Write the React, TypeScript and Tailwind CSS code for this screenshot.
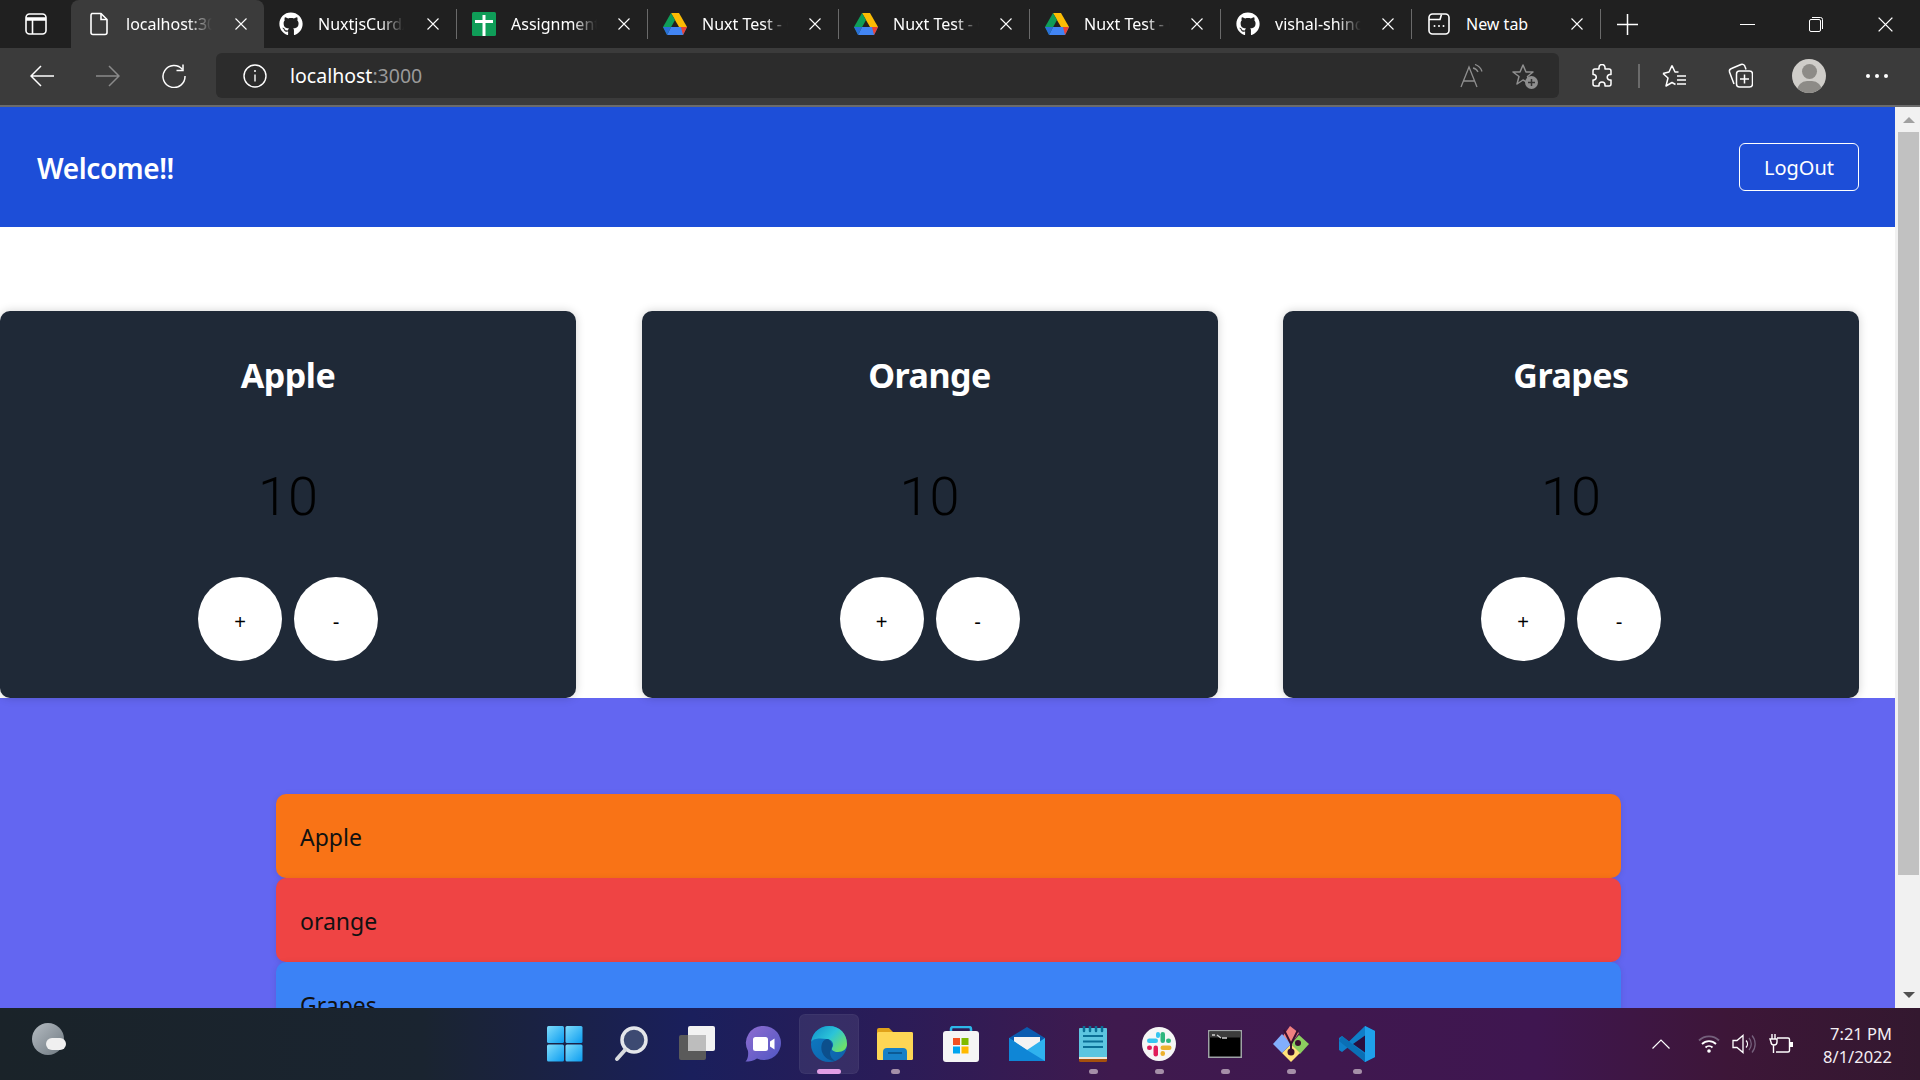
import React from "react";
import { FaGithub } from "react-icons/fa";

const sans = "font-['Noto_Sans','Open_Sans',sans-serif]";

function FileIcon() {
  return (
    <svg width="20" height="24" viewBox="0 0 20 24" fill="none" stroke="#fff" strokeWidth="1.6">
      <path d="M3 1.5h9l6 6v13a2 2 0 0 1-2 2H4a2 2 0 0 1-2-2v-17a2 2 0 0 1 1-2Z" strokeLinejoin="round" />
      <path d="M12 1.5v6h6" />
    </svg>
  );
}

function SheetIcon() {
  return (
    <svg width="24" height="24" viewBox="0 0 24 24">
      <rect width="24" height="24" rx="1.5" fill="#0f9d58" />
      <path d="M10.500 3h3v5H21v3h-7.500v13h-3V11H3V8h7.500Z" fill="#fff" />
    </svg>
  );
}

function DriveIcon() {
  return (
    <svg width="24" height="22" viewBox="0 0 24 22">
      <path d="M8 0h8l8 14h-8Z" fill="#fbbc04" />
      <path d="M8 0l4 7-8 14.500L0 14Z" fill="#0f9d58" />
      <path d="M4 22l4-8h16l-4 8Z" fill="#4285f4" />
      <path d="M0 14h8l-4 8Z" fill="#2a6fd8" />
      <path d="M20 22l4-8h-6Z" fill="#ea4335" />
    </svg>
  );
}

function NewTabIcon() {
  return (
    <svg width="22" height="22" viewBox="0 0 22 22" fill="none" stroke="#fff" strokeWidth="1.6">
      <rect x="1" y="1" width="20" height="20" rx="3.500" />
      <path d="M1 6.500h11l1.500-5" />
      <circle cx="6.500" cy="13" r="1" fill="#fff" stroke="none" />
      <circle cx="11" cy="13" r="1" fill="#fff" stroke="none" />
      <circle cx="15.500" cy="13" r="1" fill="#fff" stroke="none" />
    </svg>
  );
}

function CloseX({ size = 12 }: { size?: number }) {
  return (
    <svg width={size} height={size} viewBox="0 0 12 12" stroke="#fff" strokeWidth="1.100" fill="none">
      <path d="M.5.5l11 11M11.500.5l-11 11" />
    </svg>
  );
}

interface TabProps {
  icon: React.ReactNode;
  title: string;
  width?: string;
  fade?: boolean;
  active?: boolean;
}

function Tab({ icon, title, width = "w-[190px]", fade = true, active }: TabProps) {
  return (
    <div
      className={`flex h-full shrink-0 items-center ${width} ${
        active ? "rounded-t-lg bg-[#3b3b3b] pl-[16px] pr-[17px]" : "pl-[15px] pr-[17px]"
      }`}
    >
      <div className="flex h-6 w-6 shrink-0 items-center justify-center">{icon}</div>
      <div
        className={`ml-[15px] w-[86px] overflow-hidden whitespace-nowrap text-[16px] text-white ${
          fade ? "[mask-image:linear-gradient(90deg,#000_72%,transparent_100%)]" : ""
        }`}
      >
        {title}
      </div>
      <div className="ml-auto">
        <CloseX />
      </div>
    </div>
  );
}

function Sep() {
  return <div className="h-[30px] w-px shrink-0 bg-[#6a6a6a]" />;
}

function TabBar() {
  return (
    <div className={`flex h-12 items-center bg-[#202020] ${sans}`}>
      <div className="flex w-[71px] shrink-0 justify-center">
        <svg width="22" height="22" viewBox="0 0 22 22" fill="none" stroke="#fff" strokeWidth="1.600">
          <rect x="1" y="1" width="20" height="20" rx="3.500" />
          <path d="M1 6h20" strokeWidth="3.500" />
          <path d="M7.500 6v15" />
        </svg>
      </div>
      <div className="flex h-full items-center">
        <Tab active width="w-[193px]" icon={<FileIcon />} title="localhost:3000" />
        <Tab width="w-[192px]" icon={<FaGithub className="text-[24px] text-white" />} title="NuxtjsCurd/nuxt" />
        <Sep />
        <Tab icon={<SheetIcon />} title="Assignment 1" />
        <Sep />
        <Tab icon={<DriveIcon />} title="Nuxt Test - Google" />
        <Sep />
        <Tab icon={<DriveIcon />} title="Nuxt Test - Google" />
        <Sep />
        <Tab icon={<DriveIcon />} title="Nuxt Test - Google" />
        <Sep />
        <Tab icon={<FaGithub className="text-[24px] text-white" />} title="vishal-shinde" />
        <Sep />
        <Tab width="w-[188px]" icon={<NewTabIcon />} title="New tab" fade={false} />
        <Sep />
      </div>
      <div className="ml-[16px]">
        <svg width="21" height="21" viewBox="0 0 21 21" stroke="#fff" strokeWidth="1.500">
          <path d="M10.500 0v21M0 10.500h21" />
        </svg>
      </div>
      <div className="ml-auto flex items-center pr-[27px]">
        <div className="h-px w-[15px] bg-white" />
        <svg className="ml-[54px]" width="14" height="15" viewBox="0 0 14 15" fill="none" stroke="#fff" strokeWidth="1">
          <rect x=".5" y="2.500" width="11" height="12" rx="1.500" />
          <path d="M3 .5h8.500a2 2 0 0 1 2 2V12" />
        </svg>
        <div className="ml-[55px]">
          <CloseX size={15} />
        </div>
      </div>
    </div>
  );
}

function Toolbar() {
  return (
    <div className={`flex h-[59px] items-center border-b-2 border-[#6b6b6b] bg-[#3b3b3b] pb-[2px] pl-[30px] pr-[32px] ${sans}`}>
      <svg width="24" height="22" viewBox="0 0 24 22" fill="none" stroke="#fff" strokeWidth="1.500">
        <path d="M24 11H1M11 1 1 11l10 10" />
      </svg>
      <svg className="ml-[42px]" width="24" height="22" viewBox="0 0 24 22" fill="none" stroke="#8a8a8a" strokeWidth="1.500">
        <path d="M0 11h23M13 1l10 10-10 10" />
      </svg>
      <svg className="ml-[42px]" width="24" height="24" viewBox="0 0 24 24" fill="none" stroke="#fff" strokeWidth="1.500">
        <path d="M20.500 5.500A11 11 0 1 0 23 12" />
        <path d="M21 .5v6h-6.500" />
      </svg>
      <div className="ml-[30px] flex h-[45px] w-[1343px] shrink-0 items-center rounded-md bg-[#2c2c2c] pl-[27px] pr-[21px]">
        <svg width="24" height="24" viewBox="0 0 24 24" fill="none" stroke="#fff" strokeWidth="1.400">
          <circle cx="12" cy="12" r="11" />
          <path d="M12 10.500v7" />
          <circle cx="12" cy="7" r="1" fill="#fff" stroke="none" />
        </svg>
        <div className="ml-[23px] text-[19.500px] text-white">
          localhost<span className="text-[#9a9a9a]">:3000</span>
        </div>
        <svg className="ml-auto" width="24" height="24" viewBox="0 0 24 24" fill="none" stroke="#8f8f8f" strokeWidth="1.300">
          <path d="M1 23 9 3l8 20M3.500 17h11" />
          <path d="M13 4a7 7 0 0 1 5 4M15 .5a11 11 0 0 1 7 7" />
        </svg>
        <svg className="ml-[28px]" width="26" height="26" viewBox="0 0 26 26" fill="none" stroke="#8f8f8f" strokeWidth="1.500">
          <path d="M11 2l3 7h7l-5.500 4.500 2 7L11 17l-6 4 2-7.500L1 9h7Z" strokeLinejoin="round" />
          <circle cx="19.500" cy="19.500" r="6.500" fill="#8f8f8f" stroke="none" />
          <path d="M19.500 16v7M16 19.500h7" stroke="#333" strokeWidth="1.500" />
        </svg>
      </div>
      <svg className="ml-[32px]" width="22" height="24" viewBox="0 0 22 24" fill="none" stroke="#fff" strokeWidth="1.500">
        <path d="M8 3.500a3 3 0 0 1 6 0V5h4a2 2 0 0 1 2 2v3.500h-1.500a2.800 2.800 0 0 0 0 5.500H20v4a2 2 0 0 1-2 2h-4v-1a3 3 0 0 0-6 0v1H4a2 2 0 0 1-2-2v-4h1a2.800 2.800 0 0 0 0-5.500H2V7a2 2 0 0 1 2-2h4Z" strokeLinejoin="round" />
      </svg>
      <div className="ml-[25px] h-[24px] w-[2px] bg-[#6b6b6b]" />
      <svg className="ml-[22px]" width="25" height="24" viewBox="0 0 25 24" fill="none" stroke="#fff" strokeWidth="1.500">
        <path d="M10 1.500 13 8h3.500M1 9.500l5 4.500-2 8 6-3.500 3.500 2M10 1.500 7 8l-6 1.500M15 12h9M15 16h9M15 20h9" strokeLinejoin="round" />
      </svg>
      <svg className="ml-[41px]" width="25" height="25" viewBox="0 0 25 25" fill="none" stroke="#fff" strokeWidth="1.500">
        <path d="M6 21 1.500 9a3 3 0 0 1 2-3.500L13 1.500a3 3 0 0 1 4 2l1 3" />
        <rect x="8.500" y="8" width="16" height="16" rx="3" />
        <path d="M16.500 11.500v9M12 16h9" />
      </svg>
      <div className="relative ml-[39px] h-[34px] w-[34px] overflow-hidden rounded-full bg-[#cfcdc9]">
        <div className="absolute left-[10px] top-[5px] h-[15px] w-[15px] rounded-full bg-[#8d8b87]" />
        <div className="absolute left-[5px] top-[22px] h-[20px] w-[25px] rounded-full bg-[#8d8b87]" />
      </div>
      <div className="ml-[40px] flex gap-[5px]">
        <div className="h-[4px] w-[4px] rounded-full bg-white" />
        <div className="h-[4px] w-[4px] rounded-full bg-white" />
        <div className="h-[4px] w-[4px] rounded-full bg-white" />
      </div>
    </div>
  );
}

function CounterCard({ name }: { name: string }) {
  return (
    <div className="flex flex-col items-center rounded-[10px] bg-[#1f2937] pb-[37px] pt-[41px] shadow-[0_0_10px_rgba(0,0,0,0.18)]">
      <h2 className={`text-[34px] font-bold leading-[47px] tracking-[-0.5px] text-white ${sans}`}>{name}</h2>
      <div className="mt-[62px] font-['Roboto',sans-serif] text-[54px] font-light leading-[72px] text-black">10</div>
      <div className="mt-[44px] flex gap-3">
        <button className="h-[84px] w-[84px] rounded-full bg-white pt-[5px] font-['Liberation_Sans',sans-serif] text-[20px] text-black">+</button>
        <button className="h-[84px] w-[84px] rounded-full bg-white pt-[5px] font-['Liberation_Sans',sans-serif] text-[20px] text-black">-</button>
      </div>
    </div>
  );
}

const rows = [
  { label: "Apple", bg: "bg-[#f97316]" },
  { label: "orange", bg: "bg-[#ef4444]" },
  { label: "Grapes", bg: "bg-[#3b82f6]" },
];

function Page() {
  return (
    <div className="min-w-0 flex-1 overflow-hidden bg-white">
      <header className={`flex h-[120px] items-center justify-between bg-[#1d4ed8] pl-[37px] pr-[36px] ${sans}`}>
        <h1 className="pt-[2px] text-[28px] font-semibold tracking-[-0.4px] text-white">Welcome!!</h1>
        <button className="h-[48px] w-[120px] rounded-md border border-white pt-[2px] text-[20px] text-white">LogOut</button>
      </header>
      <section className="relative z-10 grid grid-cols-[repeat(3,576px)] gap-[65.5px] pt-[84px]">
        <CounterCard name="Apple" />
        <CounterCard name="Orange" />
        <CounterCard name="Grapes" />
      </section>
      <section className={`h-full bg-[#6366f1] pl-[276px] pr-[274px] pt-[96px] ${sans}`}>
        {rows.map((row) => (
          <div key={row.label} className={`flex h-[84px] items-center rounded-[10px] pl-6 pt-[2px] text-[23px] text-[#111] shadow-[0_1px_6px_rgba(0,0,0,0.1)] ${row.bg}`}>
            {row.label}
          </div>
        ))}
      </section>
    </div>
  );
}

function Scrollbar() {
  return (
    <div className="flex w-[25px] shrink-0 flex-col items-center bg-[#f1f1f1] pb-[3px] pl-[2px]">
      <div className="flex h-[25px] shrink-0 items-center justify-center">
        <div className="h-0 w-0 border-x-[6px] border-b-[6px] border-x-transparent border-b-[#a0a0a0]" />
      </div>
      <div className="h-[743px] w-[21px] shrink-0 bg-[#c1c1c1]" />
      <div className="mt-auto flex h-[20px] items-center justify-center">
        <div className="h-0 w-0 border-x-[6px] border-t-[6px] border-x-transparent border-t-[#505050]" />
      </div>
    </div>
  );
}

function WinIcon() {
  return (
    <svg width="36" height="36" viewBox="0 0 36 36">
      <defs>
        <linearGradient id="win" x1="0" y1="0" x2="1" y2="1">
          <stop offset="0" stopColor="#7fdcfb" />
          <stop offset="1" stopColor="#0a9cf0" />
        </linearGradient>
      </defs>
      <rect x="0" y="0" width="17" height="17" rx="1.500" fill="url(#win)" />
      <rect x="18.500" y="0" width="17" height="17" rx="1.500" fill="url(#win)" />
      <rect x="0" y="18.500" width="17" height="17" rx="1.500" fill="url(#win)" />
      <rect x="18.500" y="18.500" width="17" height="17" rx="1.500" fill="url(#win)" />
    </svg>
  );
}

function SearchIcon() {
  return (
    <svg width="34" height="36" viewBox="0 0 34 36" fill="none">
      <circle cx="20" cy="14" r="12" fill="#3d4a72" stroke="#e4e6ea" strokeWidth="3.500" />
      <path d="M11 24 3 33" stroke="#d8dade" strokeWidth="4" strokeLinecap="round" />
    </svg>
  );
}

function TaskViewIcon() {
  return (
    <svg width="36" height="36" viewBox="0 0 36 36">
      <rect x="0" y="9" width="27" height="25" rx="2" fill="#5a5a5a" />
      <rect x="9" y="0" width="27" height="25" rx="2" fill="#f2f2f2" />
      <rect x="9" y="9" width="18" height="16" fill="#bdbdbd" />
    </svg>
  );
}

function ChatIcon() {
  return (
    <svg width="36" height="36" viewBox="0 0 36 36">
      <defs>
        <linearGradient id="chat" x1="0" y1="0" x2="1" y2="1">
          <stop offset="0" stopColor="#8f6dd0" />
          <stop offset="1" stopColor="#4f56c4" />
        </linearGradient>
      </defs>
      <path d="M19 0a17 17 0 1 1-7 32.500C9 35 4 35.500.500 35.500 3 33 3.500 29 3 25A17 17 0 0 1 19 0Z" fill="url(#chat)" />
      <rect x="8" y="11" width="15" height="14" rx="2.500" fill="#fff" />
      <path d="M25 15.500l4.500-3v11l-4.500-3Z" fill="#fff" />
    </svg>
  );
}

function EdgeIcon() {
  return (
    <svg width="36" height="36" viewBox="0 0 36 36">
      <defs>
        <linearGradient id="edgeA" x1="0" y1="0" x2="1" y2=".7">
          <stop offset="0" stopColor="#0f8bc9" />
          <stop offset=".55" stopColor="#2bc4d8" />
          <stop offset="1" stopColor="#6ee06a" />
        </linearGradient>
        <linearGradient id="edgeB" x1="0" y1="0" x2="1" y2="1">
          <stop offset="0" stopColor="#0c7cc4" />
          <stop offset="1" stopColor="#0f5fa8" />
        </linearGradient>
      </defs>
      <circle cx="18" cy="18" r="18" fill="url(#edgeB)" />
      <path d="M0 16C2 5 10 0 18 0c11 0 18 8 18 18 0 5-4 8-9 8-4 0-7-2-6-4 2-2 2-8-5-9C9 12 2 12 0 16Z" fill="url(#edgeA)" />
      <path d="M16 13c-6 1-7 10-4 15 2 4 7 7 12 7-3-2-5-5-5-8 0-3 3-5 2-9-1-3-3-5-5-5Z" fill="#0c4f8c" />
    </svg>
  );
}

function FolderIcon() {
  return (
    <svg width="36" height="32" viewBox="0 0 36 32">
      <path d="M0 2a2 2 0 0 1 2-2h10l4 4h18a2 2 0 0 1 2 2v3H0Z" fill="#e0a21a" />
      <rect x="0" y="4" width="36" height="28" rx="1.500" fill="#fdd655" />
      <path d="M6 32V24a4 4 0 0 1 4-4h16a4 4 0 0 1 4 4v8Z" fill="#1680c8" />
      <rect x="11" y="24" width="14" height="2" fill="#0b5a95" />
    </svg>
  );
}

function StoreIcon() {
  return (
    <svg width="36" height="36" viewBox="0 0 36 36">
      <path d="M8 7V3a2 2 0 0 1 2-2h16a2 2 0 0 1 2 2v4" fill="none" stroke="#2db6e8" strokeWidth="2.500" />
      <rect x="0" y="5" width="36" height="31" rx="3" fill="#f5f5f5" />
      <rect x="10" y="12" width="7" height="7" fill="#f25022" />
      <rect x="18.500" y="12" width="7" height="7" fill="#7fba00" />
      <rect x="10" y="20.500" width="7" height="7" fill="#00a4ef" />
      <rect x="18.500" y="20.500" width="7" height="7" fill="#ffb900" />
    </svg>
  );
}

function MailIcon() {
  return (
    <svg width="36" height="34" viewBox="0 0 36 34">
      <path d="M0 11 18 0l18 11v6H0Z" fill="#0a5cb0" />
      <path d="M5 10h26v10L18 26 5 20Z" fill="#f3f3f3" />
      <path d="M0 11l18 12 18-12v23H0Z" fill="#2fb2ee" />
      <path d="M0 34V11l18 12 18 11Z" fill="#0f86d6" />
    </svg>
  );
}

function NotepadIcon() {
  return (
    <svg width="28" height="36" viewBox="0 0 28 36">
      <rect x="0" y="2" width="28" height="34" rx="1.500" fill="#a5500c" />
      <rect x="0" y="2" width="28" height="30" rx="1" fill="#5cc5e0" />
      <rect x="0" y="31" width="28" height="2" fill="#f1e6d6" />
      <path d="M4 10h20M4 15.500h20M4 21h20" stroke="#0a6f96" strokeWidth="1.800" />
      <path d="M5 0v5M11 0v5M17 0v5M23 0v5" stroke="#0a6f96" strokeWidth="2.500" strokeLinecap="round" />
    </svg>
  );
}

function SlackIcon() {
  return (
    <svg width="34" height="34" viewBox="0 0 34 34">
      <circle cx="17" cy="17" r="17" fill="#f6f6f6" />
      <rect x="5" y="11.500" width="11" height="4.500" rx="2.250" fill="#36c5f0" />
      <rect x="14" y="5" width="4" height="6" rx="2" fill="#36c5f0" />
      <rect x="18.500" y="5" width="4.500" height="11" rx="2.250" fill="#2eb67d" />
      <rect x="24" y="11.500" width="5" height="4.500" rx="2.250" fill="#2eb67d" />
      <rect x="18.500" y="18.500" width="11" height="4.500" rx="2.250" fill="#ecb22e" />
      <rect x="18.500" y="24" width="4.500" height="5" rx="2.250" fill="#ecb22e" />
      <rect x="11.500" y="18.500" width="4.500" height="11" rx="2.250" fill="#e01e5a" />
      <rect x="5" y="18.500" width="5" height="4.500" rx="2.250" fill="#e01e5a" />
    </svg>
  );
}

function CmdIcon() {
  return (
    <svg width="34" height="28" viewBox="0 0 34 28">
      <rect x="0" y="0" width="34" height="28" fill="#9fa3a6" />
      <rect x="1.500" y="1.500" width="31" height="25" fill="#000" />
      <rect x="1.500" y="1.500" width="31" height="6" fill="#3c3c3c" />
      <path d="M4 5h3M9 5l4 3M14 8h5" stroke="#d0d0d0" strokeWidth="1.300" fill="none" />
    </svg>
  );
}

function SnipIcon() {
  return (
    <svg width="36" height="36" viewBox="0 0 36 36">
      <path d="M18 18 10 10l7-10 9 7Z" fill="#f08080" />
      <path d="M18 18l8-9 10 9-9 10Z" fill="#8ccf5f" />
      <path d="M18 18l9 9-9 9-9-9Z" fill="#ffe27a" />
      <path d="M18 18l-9 9L0 18l9-10Z" fill="#82aefc" />
      <path d="M11 4l7 14 7-14M18 18v9" stroke="#3a1030" strokeWidth="2" fill="none" />
      <circle cx="18" cy="26" r="3.500" fill="#3a1030" />
      <circle cx="25" cy="17" r="3" fill="#3a1030" />
    </svg>
  );
}

function VSCodeIcon() {
  return (
    <svg width="36" height="36" viewBox="0 0 36 36">
      <path d="M26 0l10 5v26l-10 5-16-15.500L3 26l-3-2v-12l3-2 7 5.500Z" fill="#0f7fc8" />
      <path d="M26 0l10 5v26l-10 5Z" fill="#1fa0ea" />
      <path d="M26 9.500 14 18l12 8.500Z" fill="#2a0f3e" />
      <path d="M3 10l23 18v8L0 15Z" fill="#0a6fb5" />
    </svg>
  );
}

interface TaskItem {
  icon: React.ReactNode;
  running?: boolean;
  active?: boolean;
}

const taskItems: TaskItem[] = [
  { icon: <WinIcon /> },
  { icon: <SearchIcon /> },
  { icon: <TaskViewIcon /> },
  { icon: <ChatIcon /> },
  { icon: <EdgeIcon />, running: true, active: true },
  { icon: <FolderIcon />, running: true },
  { icon: <StoreIcon /> },
  { icon: <MailIcon /> },
  { icon: <NotepadIcon />, running: true },
  { icon: <SlackIcon />, running: true },
  { icon: <CmdIcon />, running: true },
  { icon: <SnipIcon />, running: true },
  { icon: <VSCodeIcon />, running: true },
];

function Taskbar() {
  return (
    <div className={`relative z-20 grid h-[72px] shrink-0 grid-cols-[1fr_auto_1fr] bg-[linear-gradient(90deg,#1a2329_0%,#1a2430_22%,#1a1f5c_36%,#2a1c58_46%,#3f1a4e_58%,#3f1650_80%,#3d1638_90%,#33182f_100%)] ${sans}`}>
      <div className="pl-8 pt-[15px]">
        <div className="relative h-8 w-8 rounded-full bg-[linear-gradient(135deg,#b5bcc2,#6e7880)]">
          <div className="absolute left-[14px] top-[15px] h-3 w-[20px] rounded-full bg-[#f0f0f0]" />
        </div>
      </div>
      <div className="flex items-center pl-[2px]">
        {taskItems.map((item, i) => (
          <div key={i} className="relative flex h-[60px] w-[66px] items-center justify-center">
            {item.active && <div className="absolute inset-y-0 left-[3px] right-[3px] rounded-md bg-[#ffffff14] shadow-[inset_0_0_0_1px_#ffffff0a]" />}
            <div className="relative flex items-center justify-center">{item.icon}</div>
            {item.running && (
              <div
                className={`absolute bottom-[0px] h-[5px] rounded-full ${
                  item.active ? "w-6 bg-[#e29ee6]" : "w-[9px] bg-[#a58fa8]"
                }`}
              />
            )}
          </div>
        ))}
      </div>
      <div className="flex items-center justify-end pr-7">
        <svg width="18" height="10" viewBox="0 0 18 10" fill="none" stroke="#fff" strokeWidth="1.200">
          <path d="M.5 9.500 9 1l8.500 8.500" />
        </svg>
        <svg className="ml-[28px]" width="22" height="18" viewBox="0 0 22 18" fill="none" strokeWidth="1.800">
          <path d="M1 5.500a14 14 0 0 1 20 0" stroke="#75607c" />
          <path d="M4 9a10 10 0 0 1 14 0M7.500 12.500a5 5 0 0 1 7 0" stroke="#fff" />
          <circle cx="11" cy="16" r="1.800" fill="#fff" />
        </svg>
        <svg className="ml-[12px]" width="24" height="20" viewBox="0 0 24 20" fill="none" strokeWidth="1.300">
          <path d="M1 6.500h4L11 1.500v17l-6-5H1Z" stroke="#fff" />
          <path d="M14 6.500a5 5 0 0 1 0 7" stroke="#fff" />
          <path d="M17 4a9 9 0 0 1 0 12M20 1.500a13 13 0 0 1 0 17" stroke="#75607c" />
        </svg>
        <svg className="ml-[12px]" width="25" height="20" viewBox="0 0 25 20" fill="none" stroke="#fff" strokeWidth="1.400">
          <path d="M4 0v5M7 0v5M2 5h7v3a3 3 0 0 1-6 0ZM5.500 11v8" />
          <path d="M9 4h11a1.500 1.500 0 0 1 1.500 1.500v11A1.500 1.500 0 0 1 20 18H8" />
          <rect x="22" y="8" width="3" height="5" fill="#fff" stroke="none" />
        </svg>
        <div className="ml-[30px] pt-[2px] text-right text-[16.500px] leading-[23px] text-[#f4eef4]">
          <div>7:21 PM</div>
          <div>8/1/2022</div>
        </div>
      </div>
    </div>
  );
}

export default function App() {
  return (
    <div className="flex h-screen w-screen flex-col overflow-hidden">
      <TabBar />
      <Toolbar />
      <div className="flex min-h-0 flex-1 overflow-hidden">
        <Page />
        <Scrollbar />
      </div>
      <Taskbar />
    </div>
  );
}
